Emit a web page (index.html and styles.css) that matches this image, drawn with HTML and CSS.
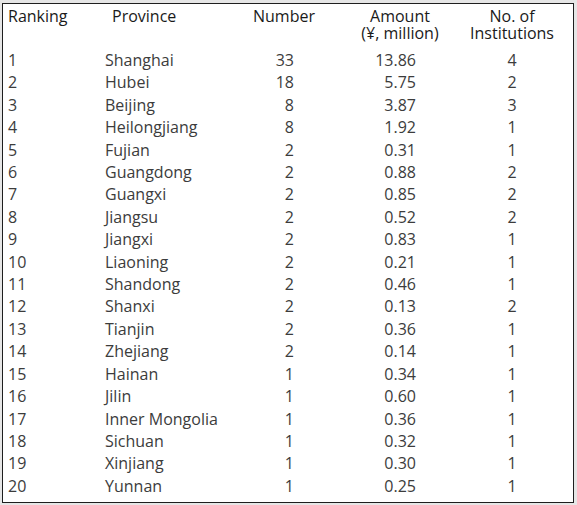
FILE: index.html
```html
<!DOCTYPE html>
<html>
<head>
<meta charset="utf-8">
<link rel="stylesheet" href="styles.css">
</head>
<body>
<div class="frame">
  <div class="grid head">
    <div class="c1">Ranking</div>
    <div class="c2">Province</div>
    <div class="c3">Number</div>
    <div class="c4">Amount<br>(¥, million)</div>
    <div class="c5">No. of<br>Institutions</div>
  </div>
  <div class="grid body" id="rows">
    <div class="c1">1</div><div class="c2">Shanghai</div><div class="c3">33</div><div class="c4">13.86</div><div class="c5">4</div>
    <div class="c1">2</div><div class="c2">Hubei</div><div class="c3">18</div><div class="c4">5.75</div><div class="c5">2</div>
    <div class="c1">3</div><div class="c2">Beijing</div><div class="c3">8</div><div class="c4">3.87</div><div class="c5">3</div>
    <div class="c1">4</div><div class="c2">Heilongjiang</div><div class="c3">8</div><div class="c4">1.92</div><div class="c5">1</div>
    <div class="c1">5</div><div class="c2">Fujian</div><div class="c3">2</div><div class="c4">0.31</div><div class="c5">1</div>
    <div class="c1">6</div><div class="c2">Guangdong</div><div class="c3">2</div><div class="c4">0.88</div><div class="c5">2</div>
    <div class="c1">7</div><div class="c2">Guangxi</div><div class="c3">2</div><div class="c4">0.85</div><div class="c5">2</div>
    <div class="c1">8</div><div class="c2">Jiangsu</div><div class="c3">2</div><div class="c4">0.52</div><div class="c5">2</div>
    <div class="c1">9</div><div class="c2">Jiangxi</div><div class="c3">2</div><div class="c4">0.83</div><div class="c5">1</div>
    <div class="c1">10</div><div class="c2">Liaoning</div><div class="c3">2</div><div class="c4">0.21</div><div class="c5">1</div>
    <div class="c1">11</div><div class="c2">Shandong</div><div class="c3">2</div><div class="c4">0.46</div><div class="c5">1</div>
    <div class="c1">12</div><div class="c2">Shanxi</div><div class="c3">2</div><div class="c4">0.13</div><div class="c5">2</div>
    <div class="c1">13</div><div class="c2">Tianjin</div><div class="c3">2</div><div class="c4">0.36</div><div class="c5">1</div>
    <div class="c1">14</div><div class="c2">Zhejiang</div><div class="c3">2</div><div class="c4">0.14</div><div class="c5">1</div>
    <div class="c1">15</div><div class="c2">Hainan</div><div class="c3">1</div><div class="c4">0.34</div><div class="c5">1</div>
    <div class="c1">16</div><div class="c2">Jilin</div><div class="c3">1</div><div class="c4">0.60</div><div class="c5">1</div>
    <div class="c1">17</div><div class="c2">Inner Mongolia</div><div class="c3">1</div><div class="c4">0.36</div><div class="c5">1</div>
    <div class="c1">18</div><div class="c2">Sichuan</div><div class="c3">1</div><div class="c4">0.32</div><div class="c5">1</div>
    <div class="c1">19</div><div class="c2">Xinjiang</div><div class="c3">1</div><div class="c4">0.30</div><div class="c5">1</div>
    <div class="c1">20</div><div class="c2">Yunnan</div><div class="c3">1</div><div class="c4">0.25</div><div class="c5">1</div>
  </div>
</div>
</body>
</html>
```

FILE: styles.css
```css
html, body {
  margin: 0;
  padding: 0;
  background: #e6e6e6;
}
body {
  padding: 3px 3px 2px 2px;
  font-family: "Open Sans", "Noto Sans", sans-serif;
  font-size: 16px;
}
.frame {
  box-sizing: border-box;
  width: 572px;
  height: 500px;
  border: 1px solid #1e1e1e;
  background: #fff;
  padding: 4px 0 0 5px;
}
.grid {
  display: grid;
  grid-template-columns: 97px 145px 88px 124px 100px;
}
.head {
  line-height: 17px;
  color: #1a1a1a;
  height: 41px;
}
.body {
  line-height: 22.4px;
  color: #3c3c3c;
}
.head .c2 { padding-left: 7px; }
.head .c3 { text-align: center; padding-right: 20px; }
.head .c4 { text-align: center; }
.head .c5 { text-align: center; }
.body .c3 { text-align: right; padding-right: 44px; }
.body .c4 { text-align: right; padding-right: 46px; }
.body .c5 { text-align: center; }
</style>
```
